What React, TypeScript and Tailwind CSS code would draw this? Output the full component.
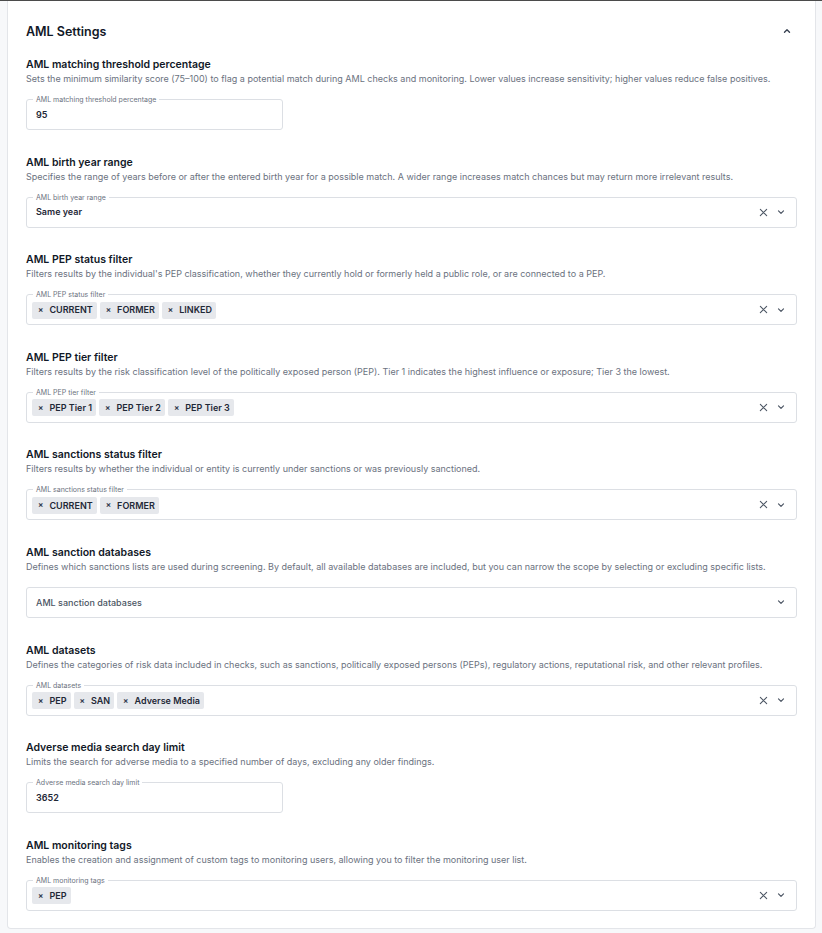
import React from "react";

type Field =
  | { kind: "text"; label: string; value: string }
  | { kind: "select"; label: string; value: string }
  | { kind: "chips"; label: string; chips: string[] }
  | { kind: "placeholder"; label: string };

type Section = { title: string; desc: string; field: Field };

const sections: Section[] = [
  {
    title: "AML matching threshold percentage",
    desc: "Sets the minimum similarity score (75–100) to flag a potential match during AML checks and monitoring. Lower values increase sensitivity; higher values reduce false positives.",
    field: { kind: "text", label: "AML matching threshold percentage", value: "95" },
  },
  {
    title: "AML birth year range",
    desc: "Specifies the range of years before or after the entered birth year for a possible match. A wider range increases match chances but may return more irrelevant results.",
    field: { kind: "select", label: "AML birth year range", value: "Same year" },
  },
  {
    title: "AML PEP status filter",
    desc: "Filters results by the individual's PEP classification, whether they currently hold or formerly held a public role, or are connected to a PEP.",
    field: { kind: "chips", label: "AML PEP status filter", chips: ["CURRENT", "FORMER", "LINKED"] },
  },
  {
    title: "AML PEP tier filter",
    desc: "Filters results by the risk classification level of the politically exposed person (PEP). Tier 1 indicates the highest influence or exposure; Tier 3 the lowest.",
    field: { kind: "chips", label: "AML PEP tier filter", chips: ["PEP Tier 1", "PEP Tier 2", "PEP Tier 3"] },
  },
  {
    title: "AML sanctions status filter",
    desc: "Filters results by whether the individual or entity is currently under sanctions or was previously sanctioned.",
    field: { kind: "chips", label: "AML sanctions status filter", chips: ["CURRENT", "FORMER"] },
  },
  {
    title: "AML sanction databases",
    desc: "Defines which sanctions lists are used during screening. By default, all available databases are included, but you can narrow the scope by selecting or excluding specific lists.",
    field: { kind: "placeholder", label: "AML sanction databases" },
  },
  {
    title: "AML datasets",
    desc: "Defines the categories of risk data included in checks, such as sanctions, politically exposed persons (PEPs), regulatory actions, reputational risk, and other relevant profiles.",
    field: { kind: "chips", label: "AML datasets", chips: ["PEP", "SAN", "Adverse Media"] },
  },
  {
    title: "Adverse media search day limit",
    desc: "Limits the search for adverse media to a specified number of days, excluding any older findings.",
    field: { kind: "text", label: "Adverse media search day limit", value: "3652" },
  },
  {
    title: "AML monitoring tags",
    desc: "Enables the creation and assignment of custom tags to monitoring users, allowing you to filter the monitoring user list.",
    field: { kind: "chips", label: "AML monitoring tags", chips: ["PEP"] },
  },
];

const ClearIcon = () => (
  <svg width="9" height="9" viewBox="0 0 10 10" className="text-[#4b5563]">
    <path d="M1.5 1.5 L8.5 8.5 M8.5 1.5 L1.5 8.5" stroke="currentColor" strokeWidth="1.2" strokeLinecap="round" fill="none" />
  </svg>
);

const ChevronDown = () => (
  <svg width="8" height="6" viewBox="0 0 8 6" className="text-[#4b5563]">
    <path d="M1.5 1.8 L4 4.3 L6.5 1.8" stroke="currentColor" strokeWidth="1.2" strokeLinecap="round" strokeLinejoin="round" fill="none" />
  </svg>
);

const ChevronUp = () => (
  <svg width="8" height="6" viewBox="0 0 8 6" className="text-[#374151]">
    <path d="M1.5 4.3 L4 1.8 L6.5 4.3" stroke="currentColor" strokeWidth="1.4" strokeLinecap="round" strokeLinejoin="round" fill="none" />
  </svg>
);

const Legend = ({ text }: { text: string }) => (
  <span className="absolute left-[6px] top-[-5px] bg-white px-[3px] text-[7px] leading-[9px] text-[#6b7280]">
    {text}
  </span>
);

function FieldBox({ field }: { field: Field }) {
  if (field.kind === "text") {
    return (
      <div className="relative flex h-[31px] w-[257px] items-center rounded-[3px] border border-[#dcdfe4] pl-[9px]">
        <Legend text={field.label} />
        <span className="text-[9px] font-semibold text-[#1f2937]">{field.value}</span>
      </div>
    );
  }
  if (field.kind === "placeholder") {
    return (
      <div className="flex h-[31px] w-full items-center justify-between rounded-[3px] border border-[#dcdfe4] pl-[9px] pr-[11px]">
        <span className="text-[9px] font-medium text-[#4b5563]">{field.label}</span>
        <ChevronDown />
      </div>
    );
  }
  return (
    <div className="relative flex h-[31px] w-full items-center justify-between rounded-[3px] border border-[#dcdfe4] pr-[11px]">
      <Legend text={field.label} />
      {field.kind === "select" ? (
        <span className="pl-[9px] text-[9px] font-semibold text-[#1f2937]">{field.value}</span>
      ) : (
        <div className="flex items-center gap-[3px] pl-[5px] pt-[1px]">
          {field.chips.map((c) => (
            <span
              key={c}
              className="flex h-[17px] items-center gap-[6px] rounded-[2px] bg-[#e6e8ec] pl-[6px] pr-[4px] text-[9px] font-semibold text-[#1f2937]"
            >
              <span className="text-[8px] font-bold text-[#374151]">×</span>
              {c}
            </span>
          ))}
        </div>
      )}
      <div className="flex items-center gap-[9px]">
        <ClearIcon />
        <ChevronDown />
      </div>
    </div>
  );
}

export default function App() {
  return (
    <div
      className="min-h-[933px] w-full border-t border-[#4b4b4b] bg-[#f7f8fa] pb-[4px] pl-[7px] pr-[6px]"
      style={{ fontFamily: "Inter, 'Noto Sans', sans-serif" }}
    >
      <div className="rounded-b-[4px] border border-t-0 border-[#e3e5e9] bg-white px-[18px] pb-[17px] pt-[20px]">
        <div className="flex h-[20px] items-center justify-between pr-[6px]">
          <h2 className="mt-[2px] text-[12.5px] font-semibold text-[#111827]">AML Settings</h2>
          <ChevronUp />
        </div>
        <div className="mt-[16px] flex flex-col gap-[24.6px]">
          {sections.map((s) => (
            <div key={s.title} className="flex flex-col">
              <h3 className="pt-[1px] text-[10.5px] leading-[13px] font-semibold text-[#111827]">{s.title}</h3>
              <p className="mt-[2px] whitespace-nowrap text-[9px] leading-[12px] text-[#6b7280]">{s.desc}</p>
              <div className="mt-[14px]">
                <FieldBox field={s.field} />
              </div>
            </div>
          ))}
        </div>
      </div>
    </div>
  );
}
